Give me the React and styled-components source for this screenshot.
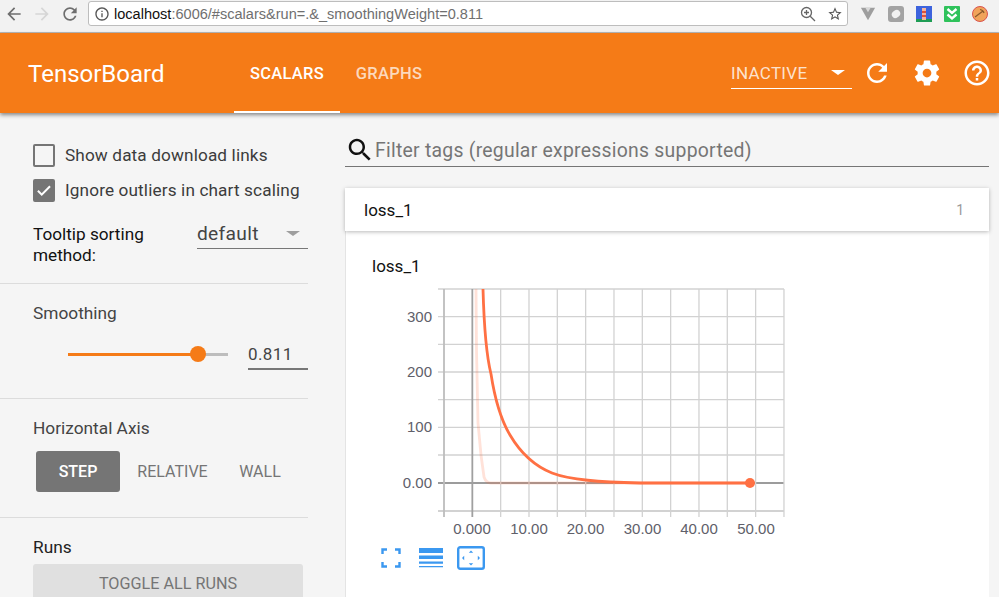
import React from 'react';
import styled, { createGlobalStyle } from 'styled-components';

const GlobalStyle = createGlobalStyle`
  html, body { margin: 0; padding: 0; background: #f5f5f5; overflow: hidden; }
  body { font-family: Roboto, "Liberation Sans", sans-serif; }
  * { box-sizing: border-box; }
`;

const Page = styled.div`
  width: 999px;
  height: 597px;
  overflow: hidden;
  display: flex;
  flex-direction: column;
`;

/* browser chrome */
const BrowserBar = styled.div`
  height: 33px;
  flex: none;
  background: #f2f2f2;
  border-bottom: 1px solid #b9b9b9;
  display: flex;
  align-items: flex-start;
  padding: 1px 0 0 4px;
`;
const NavIcon = styled.svg`
  width: 20px;
  height: 20px;
  margin: 3px 8px 0 0;
  fill: ${p => p.$fill || '#6e6e6e'};
  flex: none;
`;
const UrlBox = styled.div`
  width: 760px;
  height: 25px;
  background: #fff;
  border: 1px solid #bdbdbd;
  border-radius: 3px;
  display: flex;
  align-items: center;
  padding: 0 4px 0 5px;
  font-family: "Liberation Sans", sans-serif;
  font-size: 14.55px;
  color: #6f6f6f;
  white-space: nowrap;
`;
const UrlHost = styled.span`
  color: #111;
`;
const UrlActions = styled.div`
  margin-left: auto;
  display: flex;
  align-items: center;
  gap: 11px;
`;
const Extensions = styled.div`
  display: flex;
  align-items: center;
  gap: 12px;
  margin: 5px 0 0 12px;
`;

/* header */
const Header = styled.header`
  height: 80px;
  flex: none;
  background: #f57b17;
  display: flex;
  align-items: stretch;
  box-shadow: 0 2px 4px rgba(0, 0, 0, 0.45);
  position: relative;
  z-index: 2;
  color: #fff;
`;
const Title = styled.div`
  width: 234px;
  padding: 26px 0 0 28px;
  font-size: 24px;
  line-height: 30px;
`;
const Tab = styled.div`
  width: ${p => p.$w}px;
  padding-top: 31px;
  text-align: center;
  font-size: 16.5px;
  line-height: 20px;
  font-weight: 500;
  letter-spacing: 0.25px;
  color: ${p => (p.$active ? '#fff' : 'rgba(255,255,255,0.72)')};
  border-bottom: 2px solid ${p => (p.$active ? '#fff' : 'transparent')};
`;
const HeaderRight = styled.div`
  margin-left: auto;
  display: flex;
  align-items: center;
  padding-right: 7px;
`;
const RunSelect = styled.div`
  width: 121px;
  height: 31px;
  margin: 0 10px 0 0;
  border-bottom: 1px solid #fff;
  display: flex;
  justify-content: space-between;
  align-items: center;
  font-size: 17px;
  letter-spacing: 0.3px;
  color: rgba(255, 255, 255, 0.8);
  padding: 0 7px 0 0;
`;
const Caret = styled.span`
  width: 0;
  height: 0;
  border-left: ${p => p.$size}px solid transparent;
  border-right: ${p => p.$size}px solid transparent;
  border-top: ${p => p.$size * 0.75}px solid ${p => p.$color};
`;
const HeaderIcon = styled.svg`
  width: 30px;
  height: 30px;
  fill: #fff;
  margin-left: 20px;
  flex: none;
  &:first-of-type { margin-left: 0; }
`;

/* body */
const Body = styled.div`
  flex: 1;
  display: flex;
  min-height: 0;
`;
const Sidebar = styled.aside`
  width: 345px;
  flex: none;
  padding-right: 37px;
  color: #3c3c3c;
`;
const Section = styled.section`
  border-bottom: ${p => (p.$last ? 'none' : '1px solid #dcdcdc')};
  padding: ${p => p.$pad};
  height: ${p => p.$h}px;
`;
const CheckRow = styled.div`
  display: flex;
  align-items: center;
  height: 22px;
  margin-bottom: 13px;
  font-size: 17.2px;
  letter-spacing: 0.13px;
`;
const CheckBox = styled.span`
  width: 22px;
  height: 23px;
  flex: none;
  margin-right: 10px;
  border-radius: 2px;
  border: 2px solid #757575;
  background: ${p => (p.$on ? '#757575' : 'transparent')};
  display: flex;
  align-items: center;
  justify-content: center;
`;
const TooltipRow = styled.div`
  display: flex;
  margin-top: 21px;
`;
const TooltipLabel = styled.div`
  width: 164px;
  font-size: 17.2px;
  line-height: 21px;
  color: #111;
  padding-top: 2px;
`;
const SortSelect = styled.div`
  width: 111px;
  height: 27px;
  border-bottom: 1px solid #777;
  display: flex;
  justify-content: space-between;
  align-items: center;
  font-size: 19.2px;
  letter-spacing: 0.3px;
  padding: 0 8px 4px 0;
  color: #444;
`;
const SectionLabel = styled.div`
  font-size: 17.3px;
  line-height: 20px;
  color: ${p => p.$color || '#444'};
`;
const SliderRow = styled.div`
  display: flex;
  align-items: center;
  margin: 15px 0 0 35px;
`;
const Track = styled.div`
  width: 160px;
  height: 3px;
  background: #bdbdbd;
  position: relative;
  margin-right: 20px;
`;
const TrackFill = styled.div`
  height: 3px;
  background: #f57b17;
`;
const Thumb = styled.div`
  position: absolute;
  top: -6.5px;
  width: 16px;
  height: 16px;
  margin-left: -8px;
  border-radius: 50%;
  background: #f57b17;
`;
const SliderValue = styled.div`
  width: 60px;
  height: 32px;
  border-bottom: 2px solid #777;
  font-size: 17px;
  letter-spacing: 0.4px;
  line-height: 32px;
  color: #444;
`;
const AxisButtons = styled.div`
  display: flex;
  margin: 13px 0 0 3px;
`;
const AxisButton = styled.div`
  width: ${p => p.$w}px;
  height: 41px;
  border-radius: 3px;
  font-size: 16px;
  font-weight: ${p => (p.$active ? 500 : 400)};
  line-height: 41px;
  text-align: center;
  color: ${p => (p.$active ? '#fff' : '#757575')};
  background: ${p => (p.$active ? '#757575' : 'transparent')};
`;
const ToggleButton = styled.div`
  width: 270px;
  height: 40px;
  margin-top: 7px;
  border-radius: 3px;
  background: #e0e0e0;
  color: #757575;
  font-size: 16.2px;
  line-height: 40px;
  text-align: center;
`;

/* main column */
const Main = styled.main`
  flex: 1;
  padding-right: 10px;
  min-width: 0;
`;
const FilterRow = styled.div`
  height: 33px;
  margin-top: 21px;
  border-bottom: 1px solid #757575;
  display: flex;
  align-items: center;
  font-size: 19.4px;
  line-height: 30px;
  letter-spacing: 0.25px;
  color: #757575;
`;
const FilterText = styled.span`
  padding-top: 2px;
`;
const SearchIcon = styled.svg`
  width: 30px;
  height: 30px;
  fill: #111;
  flex: none;
`;
const CategoryHeader = styled.div`
  height: 43px;
  margin-top: 21px;
  background: #fff;
  box-shadow: 0 1px 4px rgba(0, 0, 0, 0.28);
  display: flex;
  justify-content: space-between;
  align-items: center;
  padding: 1px 25px 0 19px;
  font-size: 17px;
  color: #111;
  position: relative;
`;
const CategoryCount = styled.span`
  font-size: 14px;
  color: #9a9a9a;
`;
const CardBody = styled.div`
  background: #fff;
  height: 400px;
  border-left: 1px solid #e4e4e4;
  padding: 24px 0 0 26px;
`;
const ChartTitle = styled.div`
  font-size: 17px;
  line-height: 22px;
  color: #111;
`;
const ChartSvg = styled.svg`
  display: block;
  width: 430px;
  height: 260px;
  margin-top: 3px;
  font-family: "Liberation Sans", sans-serif;
  font-size: 15px;
`;
const ChartTools = styled.div`
  display: flex;
  align-items: center;
  margin: 5px 0 0 9px;
`;
const ToolIcon = styled.svg`
  width: ${p => p.$w}px;
  height: 26px;
  margin-right: ${p => p.$gap}px;
  flex: none;
`;

const xLines = Array.from({ length: 13 }, (_, i) => 444 + i * 28.33);
const yLines = [289, 316.7, 344.4, 372, 399.6, 427.3, 455, 483, 511];
const xLabels = [
  ['0.000', 472],
  ['10.00', 529],
  ['20.00', 585.5],
  ['30.00', 642.5],
  ['40.00', 699],
  ['50.00', 756],
];
const yLabels = [
  ['300', 316.7],
  ['200', 372],
  ['100', 427.3],
  ['0.00', 483],
];

const Chart = () => (
  <ChartSvg viewBox="372 280 430 260">
    {yLines.map(y => (
      <line key={y} x1="438" x2="784" y1={y} y2={y} stroke={y === 483 ? '#9c9c9c' : '#d2d2d2'} strokeWidth={y === 483 || y === 511 ? 1.8 : 1.3} />
    ))}
    {xLines.map((x, i) => (
      <line key={x} x1={x} x2={x} y1="289" y2="517" stroke={i === 1 ? '#a0a0a0' : i === 0 ? '#bdbdbd' : '#d2d2d2'} strokeWidth={i < 2 ? 1.8 : 1.3} />
    ))}
    {yLabels.map(([t, y]) => (
      <text key={t} x="432" y={y + 5} textAnchor="end" fill="#60606a">{t}</text>
    ))}
    {xLabels.map(([t, x]) => (
      <text key={t} x={x} y="534" textAnchor="middle" fill="#60606a">{t}</text>
    ))}
    <path d="M476 289 L476.5 350 L478 423 L481 455 L484 477 Q486 483 491 483 L750 483" fill="none" stroke="#ff7043" strokeOpacity="0.2" strokeWidth="2.8" />
    <path d="M483 289 C484 325 487 358 491 374 C495 400 501 420 510 435 C520 452 532 465 552 473 C570 480 600 482 640 483 L750 483" fill="none" stroke="#ff7043" strokeWidth="2.8" />
    <circle cx="750" cy="483" r="5" fill="#ff7043" />
  </ChartSvg>
);

const App = () => (
  <Page>
    <GlobalStyle />
    <BrowserBar>
      <NavIcon viewBox="0 0 24 24"><path d="M20 11H7.83l5.59-5.59L12 4l-8 8 8 8 1.41-1.41L7.83 13H20v-2z" /></NavIcon>
      <NavIcon viewBox="0 0 24 24" $fill="#d6d6d6"><path d="M12 4l-1.41 1.41L16.17 11H4v2h12.17l-5.58 5.59L12 20l8-8z" /></NavIcon>
      <NavIcon viewBox="0 0 24 24"><path d="M17.65 6.35C16.2 4.9 14.21 4 12 4c-4.42 0-7.99 3.58-7.99 8s3.57 8 7.99 8c3.73 0 6.84-2.55 7.73-6h-2.08c-.82 2.33-3.04 4-5.65 4-3.31 0-6-2.69-6-6s2.69-6 6-6c1.66 0 3.14.69 4.22 1.78L13 11h7V4l-2.35 2.35z" /></NavIcon>
      <UrlBox>
        <svg width="16" height="16" viewBox="0 0 24 24" fill="#555" style={{ marginRight: 4 }}>
          <path d="M11 7h2v2h-2zm0 4h2v6h-2zm1-9C6.48 2 2 6.48 2 12s4.48 10 10 10 10-4.48 10-10S17.52 2 12 2zm0 18c-4.41 0-8-3.59-8-8s3.59-8 8-8 8 3.59 8 8-3.59 8-8 8z" />
        </svg>
        <UrlHost>localhost</UrlHost>:6006/#scalars&amp;run=.&amp;_smoothingWeight=0.811
        <UrlActions>
          <svg width="16" height="16" viewBox="0 0 16 16" fill="none" stroke="#666" strokeWidth="1.3">
            <circle cx="6.5" cy="6.5" r="5" />
            <path d="M10.2 10.2L15 15M4 6.5h5M6.5 4v5" />
          </svg>
          <svg width="16" height="16" viewBox="0 0 24 24" fill="#555">
            <path d="M22 9.24l-7.19-.62L12 2 9.19 8.63 2 9.24l5.46 4.73L5.82 21 12 17.27 18.18 21l-1.63-7.03L22 9.24zM12 15.4l-3.76 2.27 1-4.28-3.32-2.88 4.38-.38L12 6.1l1.71 4.04 4.38.38-3.32 2.88 1 4.28L12 15.4z" />
          </svg>
        </UrlActions>
      </UrlBox>
      <Extensions>
        <svg width="16" height="16" viewBox="0 0 18 16"><path d="M1 1h16L9 15z" fill="#9e9e9e" /><path d="M6 1h6L9 6z" fill="#d8d8d8" /></svg>
        <svg width="16" height="16" viewBox="0 0 16 16"><rect width="16" height="16" rx="3" fill="#a3a3a3" /><ellipse cx="8" cy="8" rx="4.5" ry="3.6" fill="#f1f1f1" transform="rotate(-35 8 8)" /></svg>
        <svg width="16" height="16" viewBox="0 0 16 16"><rect width="16" height="16" fill="#3d63dd" /><rect y="13" width="16" height="3" fill="#1f9d55" /><rect x="6" y="2" width="4" height="12" fill="#f2b5a0" /><rect x="6" y="5" width="4" height="2" fill="#e0503a" /><rect x="6" y="9" width="4" height="2" fill="#e0503a" /></svg>
        <svg width="16" height="16" viewBox="0 0 16 16"><rect width="16" height="16" rx="1" fill="#2fc25b" /><path d="M3.5 3L8 7l4.5-4M3.5 8.5L8 12.5l4.5-4" fill="none" stroke="#fff" strokeWidth="2.4" /></svg>
        <svg width="16" height="16" viewBox="0 0 16 16"><circle cx="8" cy="8" r="7.5" fill="#f0a35a" stroke="#d9534f" /><path d="M3 11L11 5M8 3.5c2 .2 3.5 1.5 4 3.5" fill="none" stroke="#8a5a2b" strokeWidth="1.2" /></svg>
      </Extensions>
    </BrowserBar>

    <Header>
      <Title>TensorBoard</Title>
      <Tab $w={106} $active>SCALARS</Tab>
      <Tab $w={98}>GRAPHS</Tab>
      <HeaderRight>
        <RunSelect>INACTIVE<Caret $size={7} $color="#fff" /></RunSelect>
        <HeaderIcon viewBox="0 0 24 24"><path d="M17.65 6.35C16.2 4.9 14.21 4 12 4c-4.42 0-7.99 3.58-7.99 8s3.57 8 7.99 8c3.73 0 6.84-2.55 7.73-6h-2.08c-.82 2.33-3.04 4-5.65 4-3.31 0-6-2.69-6-6s2.69-6 6-6c1.66 0 3.14.69 4.22 1.78L13 11h7V4l-2.35 2.35z" /></HeaderIcon>
        <HeaderIcon viewBox="0 0 24 24"><path d="M19.43 12.98c.04-.32.07-.64.07-.98s-.03-.66-.07-.98l2.11-1.65c.19-.15.24-.42.12-.64l-2-3.46c-.12-.22-.39-.3-.61-.22l-2.49 1c-.52-.4-1.08-.73-1.69-.98l-.38-2.65C14.46 2.18 14.25 2 14 2h-4c-.25 0-.46.18-.49.42l-.38 2.65c-.61.25-1.17.59-1.69.98l-2.49-1c-.23-.09-.49 0-.61.22l-2 3.46c-.13.22-.07.49.12.64l2.11 1.65c-.04.32-.07.65-.07.98s.03.66.07.98l-2.11 1.65c-.19.15-.24.42-.12.64l2 3.46c.12.22.39.3.61.22l2.49-1c.52.4 1.08.73 1.69.98l.38 2.65c.03.24.24.42.49.42h4c.25 0 .46-.18.49-.42l.38-2.65c.61-.25 1.17-.59 1.69-.98l2.49 1c.23.09.49 0 .61-.22l2-3.46c.12-.22.07-.49-.12-.64l-2.11-1.65zM12 15.5c-1.93 0-3.5-1.57-3.5-3.5s1.57-3.5 3.5-3.5 3.5 1.57 3.5 3.5-1.57 3.5-3.5 3.5z" /></HeaderIcon>
        <HeaderIcon viewBox="0 0 24 24"><path d="M11 18h2v-2h-2v2zm1-16C6.48 2 2 6.48 2 12s4.48 10 10 10 10-4.48 10-10S17.52 2 12 2zm0 18c-4.41 0-8-3.59-8-8s3.59-8 8-8 8 3.59 8 8-3.59 8-8 8zm0-14c-2.21 0-4 1.79-4 4h2c0-1.1.9-2 2-2s2 .9 2 2c0 2-3 1.75-3 5h2c0-2.25 3-2.5 3-5 0-2.21-1.79-4-4-4z" /></HeaderIcon>
      </HeaderRight>
    </Header>

    <Body>
      <Sidebar>
        <Section $h={171} $pad="31px 0 0 33px">
          <CheckRow><CheckBox />Show data download links</CheckRow>
          <CheckRow>
            <CheckBox $on>
              <svg width="20" height="20" viewBox="0 0 24 24" fill="#fff"><path d="M9 16.2L4.8 12l-1.9 1.9L9 20 21 8l-1.9-1.9z" /></svg>
            </CheckBox>
            Ignore outliers in chart scaling
          </CheckRow>
          <TooltipRow>
            <TooltipLabel>Tooltip sorting method:</TooltipLabel>
            <SortSelect>default<Caret $size={7} $color="#9e9e9e" /></SortSelect>
          </TooltipRow>
        </Section>
        <Section $h={115} $pad="19px 0 0 33px">
          <SectionLabel>Smoothing</SectionLabel>
          <SliderRow>
            <Track>
              <TrackFill style={{ width: '81.1%' }} />
              <Thumb style={{ left: '81.1%' }} />
            </Track>
            <SliderValue>0.811</SliderValue>
          </SliderRow>
        </Section>
        <Section $h={119} $pad="19px 0 0 33px">
          <SectionLabel>Horizontal Axis</SectionLabel>
          <AxisButtons>
            <AxisButton $w={84} $active>STEP</AxisButton>
            <AxisButton $w={105}>RELATIVE</AxisButton>
            <AxisButton $w={70}>WALL</AxisButton>
          </AxisButtons>
        </Section>
        <Section $h={80} $last $pad="19px 0 0 33px">
          <SectionLabel $color="#222">Runs</SectionLabel>
          <ToggleButton>TOGGLE ALL RUNS</ToggleButton>
        </Section>
      </Sidebar>

      <Main>
        <FilterRow>
          <SearchIcon viewBox="0 0 24 24"><path d="M15.5 14h-.79l-.28-.27C15.41 12.59 16 11.11 16 9.5 16 5.91 13.09 3 9.5 3S3 5.91 3 9.5 5.91 16 9.5 16c1.61 0 3.09-.59 4.23-1.57l.27.28v.79l5 4.99L20.49 19l-4.99-5zm-6 0C7.01 14 5 11.99 5 9.5S7.01 5 9.5 5 14 7.01 14 9.5 11.99 14 9.5 14z" /></SearchIcon>
          <FilterText>Filter tags (regular expressions supported)</FilterText>
        </FilterRow>
        <CategoryHeader>loss_1<CategoryCount>1</CategoryCount></CategoryHeader>
        <CardBody>
          <ChartTitle>loss_1</ChartTitle>
          <Chart />
          <ChartTools>
            <ToolIcon $w={20} $gap={18} viewBox="0 0 20 26">
              <path d="M1.5 9V4.5H6M14 4.5h4.5V9M18.5 17v4.5H14M6 21.5H1.5V17" fill="none" stroke="#3b98f0" strokeWidth="2.4" />
            </ToolIcon>
            <ToolIcon $w={24} $gap={14} viewBox="0 0 24 26">
              <path d="M0 3h24v5H0zM0 10.5h24v3.4H0zM0 16.5h24v2.2H0zM0 21h24v1.2H0z" fill="#3b98f0" />
            </ToolIcon>
            <ToolIcon $w={28} $gap={0} viewBox="0 0 28 26">
              <rect x="1.2" y="2.2" width="25.6" height="21.6" rx="2" fill="none" stroke="#3b98f0" strokeWidth="2.4" />
              <path d="M14 5.5l2.2 2.2h-4.4zM14 20.5l2.2-2.2h-4.4zM5 13l2.2-2.2v4.4zM23 13l-2.2-2.2v4.4z" fill="#3b98f0" />
            </ToolIcon>
          </ChartTools>
        </CardBody>
      </Main>
    </Body>
  </Page>
);

export default App;
